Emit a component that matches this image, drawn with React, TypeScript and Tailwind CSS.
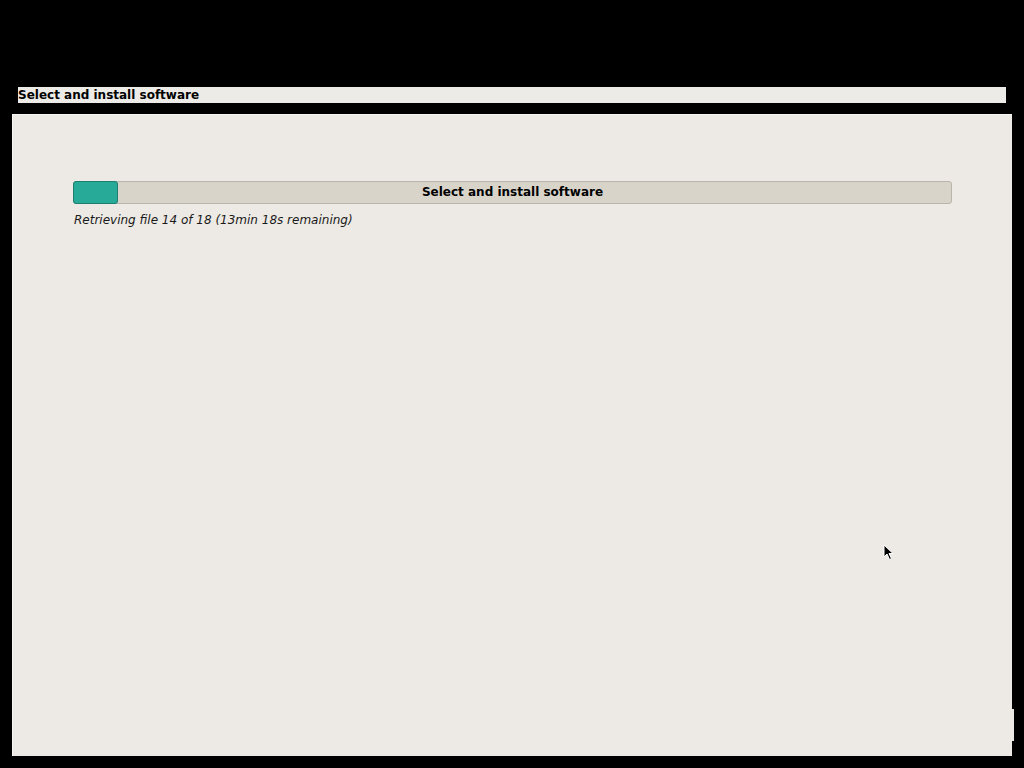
export default function App() {
    return (
        <div className="w-[1024px] h-[768px] bg-black flex flex-col font-['DejaVu_Sans',sans-serif] text-black overflow-hidden">
            {/* top title strip */}
            <div className="mt-[87px] ml-[18px] w-[988px] h-[16px] bg-[#edebe7] flex items-center">
                <span className="text-[12px] font-bold leading-none -mt-[1px]">Select and install software</span>
            </div>

            <div className="flex mt-[11px]">
                <div className="ml-[12px] w-[1000px] h-[642px] bg-[#edeae5] border-t border-l border-[#f7f6f3] pt-[66px] pl-[60px]">
                    <div className="relative w-[879px] h-[23px] rounded-[3px] border border-[#b8b5ac] bg-[#d8d4ca] flex items-center justify-center">
                        <div className="absolute left-[-1px] top-[-1px] w-[45px] h-[23px] rounded-[3px] border border-[#1c7f72] bg-[#27aa98]"></div>
                        <span className="relative text-[12px] font-bold -mt-[1px]">Select and install software</span>
                    </div>
                    <p className="mt-[8px] ml-[1px] text-[12px] italic leading-[16px] text-[#1a1a1a]">
                        Retrieving file 14 of 18 (13min 18s remaining)
                    </p>
                </div>
                <div className="mt-[595px] w-[2px] h-[32px] bg-[#edeae5]"></div>
            </div>

            {/* mouse pointer */}
            <svg className="absolute left-[883px] top-[544px]" width="11" height="17" viewBox="0 0 11 17">
                <path d="M1 1 L1 13 L4 10 L6.5 15.5 L8.5 14.5 L6 9.5 L10 9.5 Z" fill="#000" stroke="#fff" strokeWidth="1" />
            </svg>
        </div>
    );
}
